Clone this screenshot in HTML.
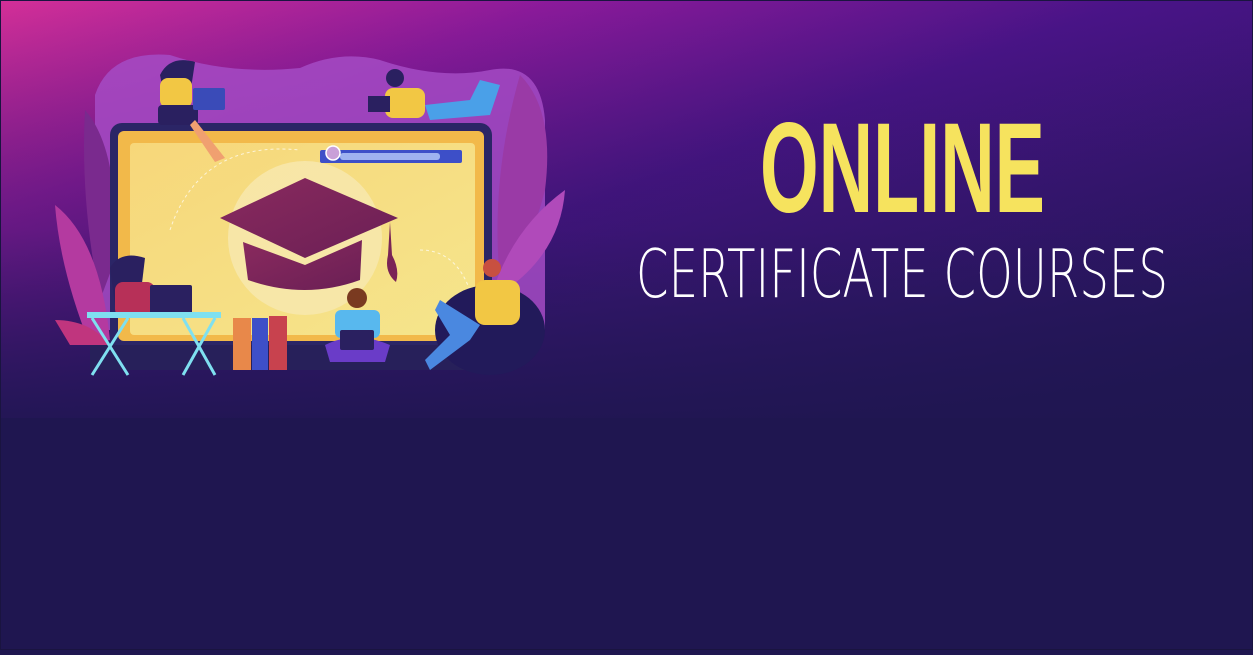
<!DOCTYPE html>
<html><head><meta charset="utf-8"><style>
html,body{margin:0;padding:0;width:1253px;height:650px;overflow:hidden;background:#1f1650}
.wrap{position:absolute;left:0;top:0;width:1253px;height:650px}
</style></head><body><div class="wrap">
<svg width="1253" height="650" viewBox="0 0 1253 650" xmlns="http://www.w3.org/2000/svg">
<defs>
<linearGradient id="bg" x1="0" y1="0" x2="1" y2="0.9">
<stop offset="0" stop-color="#d42f98"/>
<stop offset="0.25" stop-color="#8a1a9a"/>
<stop offset="0.5" stop-color="#4a1488"/>
<stop offset="1" stop-color="#221658"/>
</linearGradient>
<linearGradient id="fade" x1="0" y1="0" x2="0" y2="1">
<stop offset="0" stop-color="#1f1650" stop-opacity="0"/>
<stop offset="0.55" stop-color="#1f1650" stop-opacity="0.3"/>
<stop offset="1" stop-color="#1f1650" stop-opacity="0.9"/>
</linearGradient>
<linearGradient id="scr" x1="0" y1="0" x2="1" y2="1">
<stop offset="0" stop-color="#f7d77a"/>
<stop offset="1" stop-color="#f5e58c"/>
</linearGradient>
<linearGradient id="cap" x1="0" y1="0" x2="1" y2="1">
<stop offset="0" stop-color="#8a2a5e"/>
<stop offset="1" stop-color="#6a1f55"/>
</linearGradient>
</defs>
<rect width="1253" height="650" fill="#1f1650"/>
<rect width="1253" height="418" fill="url(#bg)"/>
<rect width="1253" height="418" fill="url(#fade)"/>
<rect x="0" y="0" width="1253" height="650" fill="none" stroke="#1a1440" stroke-width="2"/>
<path d="M95 95 Q110 50 170 55 Q230 75 300 68 Q340 50 380 60 Q440 80 490 70 Q540 60 545 120 L545 330 L95 330 Z" fill="#a54bc4" opacity="0.85"/>
<path d="M85 110 Q120 150 115 260 L100 300 Q80 200 85 110Z" fill="#7a2a8e"/>
<path d="M55 205 Q100 240 110 340 L90 345 Q60 270 55 205Z" fill="#b43aa0"/>
<path d="M55 320 Q90 320 110 345 L70 345Z" fill="#c0357e"/>
<path d="M520 75 Q555 110 545 190 Q530 250 500 280 Q490 180 520 75Z" fill="#9a3aa6"/>
<path d="M565 190 Q560 260 490 300 Q510 230 565 190Z" fill="#b04aba"/>
<rect x="110" y="123" width="382" height="228" rx="12" fill="#2b2566"/>
<rect x="118" y="131" width="366" height="210" rx="6" fill="#f2b94a"/>
<rect x="130" y="143" width="345" height="192" rx="4" fill="url(#scr)"/>
<rect x="90" y="345" width="410" height="25" fill="#27205a"/>
<circle cx="305" cy="238" r="77" fill="#f8e9b0" opacity="0.8"/>
<path d="M170 230 Q200 140 300 150" fill="none" stroke="#fff" stroke-dasharray="3 3" opacity="0.7"/>
<path d="M420 250 Q470 250 478 330" fill="none" stroke="#fff" stroke-dasharray="3 3" opacity="0.7"/>
<rect x="320" y="150" width="142" height="13" rx="2" fill="#3d4fc8"/>
<rect x="340" y="153" width="100" height="7" rx="3" fill="#9fb2f0"/>
<circle cx="333" cy="153" r="7" fill="#c9a0d8" stroke="#fff" stroke-width="1.5"/>
<path d="M220 218 L305 178 L398 218 L305 258 Z" fill="url(#cap)"/>
<path d="M243 242 L305 265 L362 240 L360 280 Q305 300 248 280 Z" fill="url(#cap)"/>
<path d="M390 222 L392 255 Q400 270 396 282 Q384 272 388 255Z" fill="#7a2456"/>
<rect x="233" y="318" width="18" height="52" fill="#e8884a"/>
<rect x="252" y="318" width="16" height="52" fill="#3e4fc8"/>
<rect x="269" y="316" width="18" height="54" fill="#c8424e"/>
<path d="M160 75 Q170 55 195 62 L190 95 L165 100 Z" fill="#2a2060"/>
<rect x="160" y="78" width="32" height="30" rx="8" fill="#f2c744"/>
<rect x="158" y="105" width="40" height="20" rx="4" fill="#2a2060"/>
<rect x="193" y="88" width="32" height="22" rx="2" fill="#3a4bb8"/>
<path d="M195 120 L225 158 L215 162 L190 125Z" fill="#f0a070"/>
<rect x="385" y="88" width="40" height="30" rx="8" fill="#f2c744"/>
<circle cx="395" cy="78" r="9" fill="#2a2060"/>
<path d="M425 105 L470 100 L480 80 L500 85 L490 115 L430 120Z" fill="#4aa0e8"/>
<rect x="368" y="96" width="22" height="16" fill="#2a2060"/>
<path d="M110 268 Q120 250 145 258 L140 300 L115 305Z" fill="#2a2060"/>
<rect x="115" y="282" width="40" height="35" rx="8" fill="#b73058"/>
<rect x="150" y="285" width="42" height="30" rx="2" fill="#2a2060"/>
<rect x="87" y="312" width="134" height="6" fill="#7fe0f0"/>
<path d="M92 375 L128 318 M128 375 L92 318 M183 375 L215 318 M215 375 L183 318" stroke="#7fe0f0" stroke-width="3"/>
<rect x="335" y="310" width="45" height="28" rx="6" fill="#58b8ee"/>
<circle cx="357" cy="298" r="10" fill="#7a3a20"/>
<path d="M325 345 Q355 330 390 345 L385 362 L330 362Z" fill="#6a3cc8"/>
<rect x="340" y="330" width="34" height="20" rx="2" fill="#2a2060"/>
<ellipse cx="490" cy="330" rx="55" ry="45" fill="#221a5a"/>
<rect x="475" y="280" width="45" height="45" rx="10" fill="#f2c744"/>
<path d="M440 300 L480 325 L470 340 L430 370 L425 360 L450 335 L435 310Z" fill="#4a88e0"/>
<circle cx="492" cy="268" r="9" fill="#c85040"/>
<text x="760" y="212" textLength="285" lengthAdjust="spacingAndGlyphs" font-family="Liberation Sans Narrow, Liberation Sans, sans-serif" font-size="128" font-weight="bold" fill="#f6e35e">ONLINE</text>
<text x="636" y="297" textLength="532" lengthAdjust="spacingAndGlyphs" font-family="DejaVu Sans, sans-serif" font-size="67" font-weight="200" fill="#ffffff">CERTIFICATE COURSES</text>
</svg>
</div></body></html>
